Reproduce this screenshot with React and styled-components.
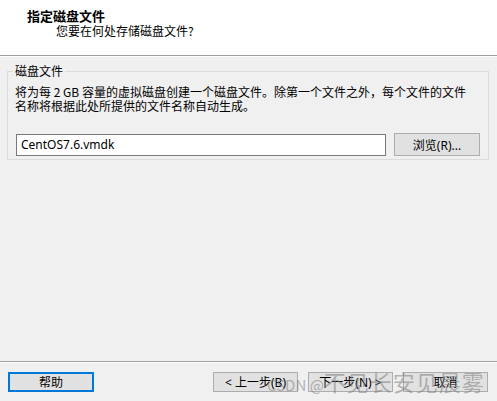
import React from "react";
import styled, { createGlobalStyle } from "styled-components";

const GlobalStyle = createGlobalStyle`
  html, body {
    margin: 0;
    padding: 0;
    background: #f0f0f0;
  }
  body {
    font-family: "Segoe UI", "Noto Sans", "Noto Sans CJK SC", sans-serif;
    font-size: 12px;
    color: #000;
  }
`;

const Win = styled.div`
  position: relative;
  width: 497px;
  height: 401px;
  display: flex;
  flex-direction: column;
  background: #f0f0f0;
  overflow: hidden;
`;

const Header = styled.div`
  height: 56px;
  box-sizing: border-box;
  background: #fff;
  padding: 9px 0 0 27px;
  border-bottom: 1px solid #a0a0a0;
  box-shadow: 0 1px 0 #ffffff;
`;

const Title = styled.div`
  font-family: "Noto Sans CJK SC", sans-serif;
  font-size: 13px;
  font-weight: bold;
  line-height: 14px;
`;

const Subtitle = styled.div`
  font-family: "Noto Sans CJK SC", sans-serif;
  font-size: 12px;
  line-height: 16px;
  margin-left: 29px;
`;

const Body = styled.div`
  flex: 1;
  padding: 9px 8px 0 7px;
`;

const Group = styled.fieldset`
  margin: 0;
  padding: 0 8px 3px 5px;
  border: 1px solid #dcdcdc;
  min-width: 0;
`;

const Legend = styled.legend`
  padding: 0 2px;
  font-family: "Noto Sans CJK SC", sans-serif;
  font-size: 12px;
  line-height: 12px;
`;

const Desc = styled.div`
  margin: 8px 0 0 2px;
  font-family: "Noto Sans CJK SC", sans-serif;
  font-size: 12px;
  line-height: 14px;
  white-space: nowrap;
`;

const Row = styled.div`
  display: flex;
  align-items: center;
  gap: 8px;
  margin: 20px 0 0 3px;
  height: 23px;
`;

const Field = styled.div`
  width: 370px;
  height: 22px;
  box-sizing: border-box;
  border: 1px solid #7a7a7a;
  background: #fff;
  padding-left: 4px;
  line-height: 20px;
  font-size: 12px;
`;

const Button = styled.div`
  width: ${(p) => p.w || 85}px;
  height: ${(p) => p.h || 20}px;
  box-sizing: border-box;
  border: ${(p) => (p.focused ? "2px solid #0078d7" : "1px solid #adadad")};
  background: #e1e1e1;
  display: flex;
  align-items: center;
  justify-content: center;
  font-family: "Segoe UI", "Noto Sans", "Noto Sans CJK SC", sans-serif;
  font-size: 12px;
  white-space: nowrap;
`;

const Footer = styled.div`
  height: 40px;
  box-sizing: border-box;
  border-top: 1px solid #a0a0a0;
  box-shadow: inset 0 1px 0 #ffffff;
  padding: 10px 9px 0 8px;
  display: flex;
  align-items: flex-start;
  gap: 10px;
`;

const Spacer = styled.div`
  flex: 1;
`;

const Watermark = styled.div`
  position: absolute;
  left: 267px;
  top: 368px;
  font-family: "Noto Sans CJK SC", sans-serif;
  font-size: 22px;
  line-height: 26px;
  letter-spacing: 1px;
  color: rgba(125, 125, 125, 0.55);
  white-space: nowrap;
  pointer-events: none;
`;

const MarkLatin = styled.span`
  font-size: 15px;
  letter-spacing: 0;
`;

export default function App() {
  return (
    <Win>
      <GlobalStyle />
      <Header>
        <Title>指定磁盘文件</Title>
        <Subtitle>您要在何处存储磁盘文件?</Subtitle>
      </Header>
      <Body>
        <Group>
          <Legend>磁盘文件</Legend>
          <Desc>
            将为每 2 GB 容量的虚拟磁盘创建一个磁盘文件。除第一个文件之外，每个文件的文件
            <br />
            名称将根据此处所提供的文件名称自动生成。
          </Desc>
          <Row>
            <Field>CentOS7.6.vmdk</Field>
            <Button w={86} h={23}>浏览(R)...</Button>
          </Row>
        </Group>
      </Body>
      <Footer>
        <Button w={86} focused>帮助</Button>
        <Spacer />
        <Button>&lt; 上一步(B)</Button>
        <Button>下一步(N) &gt;</Button>
        <Button>取消</Button>
      </Footer>
      <Watermark>
        <MarkLatin>CSDN @</MarkLatin>不见长安见晨雾
      </Watermark>
    </Win>
  );
}
